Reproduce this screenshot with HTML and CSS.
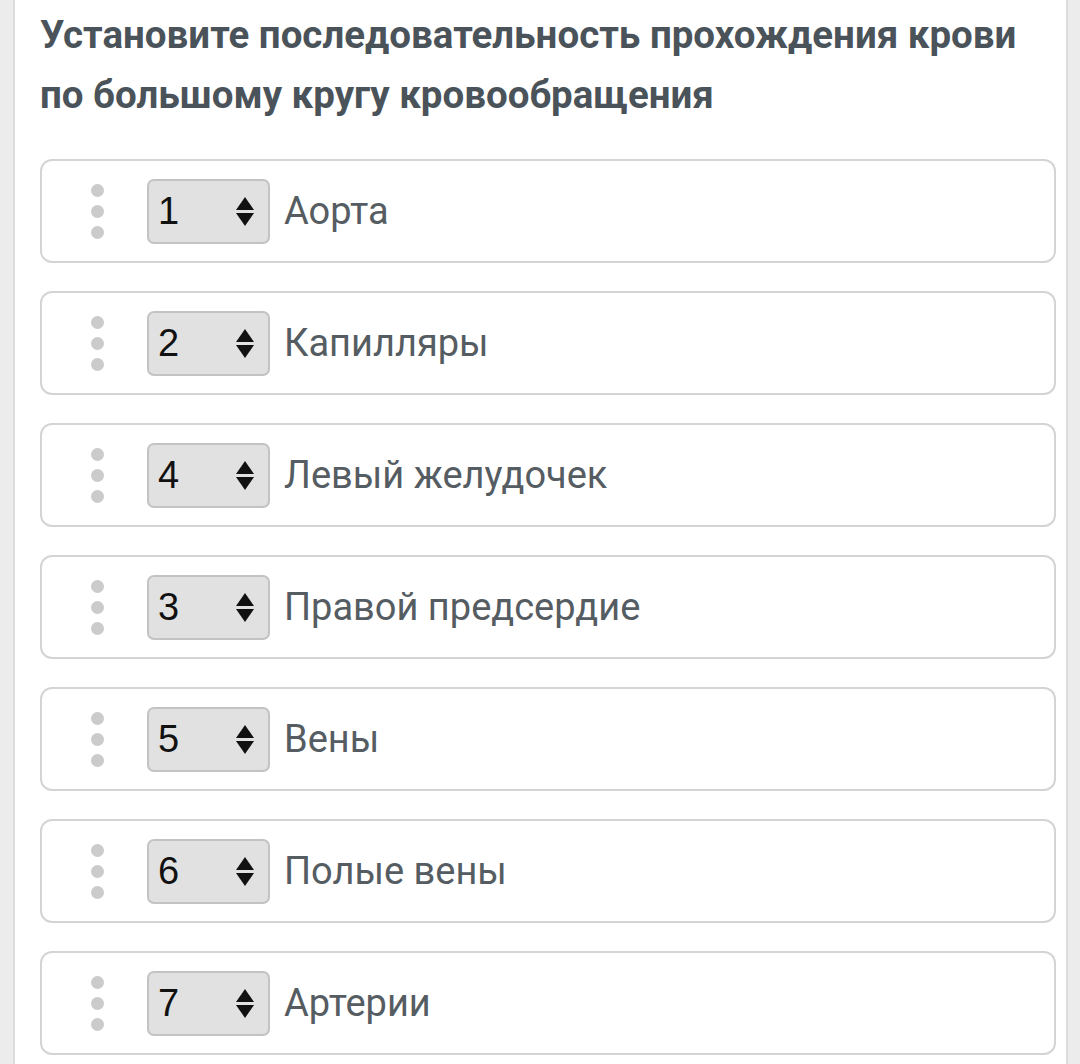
FILE: index.html
```html
<!DOCTYPE html>
<html lang="ru">
<head>
<meta charset="utf-8">
<link rel="stylesheet" href="styles.css">
</head>
<body>
<div class="page">
  <h1 class="title">Установите последовательность прохождения крови по большому кругу кровообращения</h1>
  <ul class="list">
    <li class="item"><span class="grip"><i></i><i></i><i></i></span><span class="select"><span class="num">1</span><span class="arrows"></span></span><span class="label">Аорта</span></li>
    <li class="item"><span class="grip"><i></i><i></i><i></i></span><span class="select"><span class="num">2</span><span class="arrows"></span></span><span class="label">Капилляры</span></li>
    <li class="item"><span class="grip"><i></i><i></i><i></i></span><span class="select"><span class="num">4</span><span class="arrows"></span></span><span class="label">Левый желудочек</span></li>
    <li class="item"><span class="grip"><i></i><i></i><i></i></span><span class="select"><span class="num">3</span><span class="arrows"></span></span><span class="label">Правой предсердие</span></li>
    <li class="item"><span class="grip"><i></i><i></i><i></i></span><span class="select"><span class="num">5</span><span class="arrows"></span></span><span class="label">Вены</span></li>
    <li class="item"><span class="grip"><i></i><i></i><i></i></span><span class="select"><span class="num">6</span><span class="arrows"></span></span><span class="label">Полые вены</span></li>
    <li class="item"><span class="grip"><i></i><i></i><i></i></span><span class="select"><span class="num">7</span><span class="arrows"></span></span><span class="label">Артерии</span></li>
  </ul>
</div>
</body>
</html>
```
FILE: styles.css
```css
html, body {
  margin: 0;
  padding: 0;
}
body {
  background: #ececec;
  font-family: Roboto, "Noto Sans", Arial, sans-serif;
  height: 1064px;
  overflow: hidden;
}
.page {
  margin: 0 12px 0 13px;
  background: #ffffff;
  border-left: 2px solid #dcdcdc;
  border-right: 2px solid #dcdcdc;
  padding: 5px 10px 0 25px;
  height: 1064px;
  box-sizing: border-box;
}
.title {
  margin: 0 -10px 0 0;
  font-size: 38.5px;
  line-height: 60px;
  font-weight: 700;
  color: #4b535a;
  letter-spacing: 0;
}
.list {
  list-style: none;
  margin: 34px 0 0 0;
  padding: 0;
  display: flex;
  flex-direction: column;
  gap: 28px;
}
.item {
  height: 104px;
  box-sizing: border-box;
  border: 2px solid #d4d4d4;
  border-radius: 12px;
  display: flex;
  align-items: center;
  padding-left: 49px;
}
.grip {
  display: flex;
  flex-direction: column;
  gap: 8px;
  width: 14px;
  margin-right: 42px;
}
.grip i {
  display: block;
  width: 13px;
  height: 13px;
  border-radius: 50%;
  background: #cbcbcb;
}
.select {
  width: 123px;
  height: 65px;
  box-sizing: border-box;
  background: #e1e1e1;
  border: 2px solid #c3c3c3;
  border-radius: 7px;
  display: flex;
  align-items: center;
  justify-content: space-between;
  padding: 0 14px 0 9px;
  margin-right: 14px;
}
.num {
  font-family: "Liberation Sans", Arial, sans-serif;
  font-size: 38px;
  color: #111;
}
.arrows {
  position: relative;
  width: 18px;
  height: 29px;
}
.arrows::before, .arrows::after {
  content: "";
  position: absolute;
  left: 0;
  border-left: 9px solid transparent;
  border-right: 9px solid transparent;
}
.arrows::before {
  top: 0;
  border-bottom: 13px solid #111;
}
.arrows::after {
  bottom: 0;
  border-top: 13px solid #111;
}
.label {
  font-size: 38px;
  color: #555c62;
}
```
